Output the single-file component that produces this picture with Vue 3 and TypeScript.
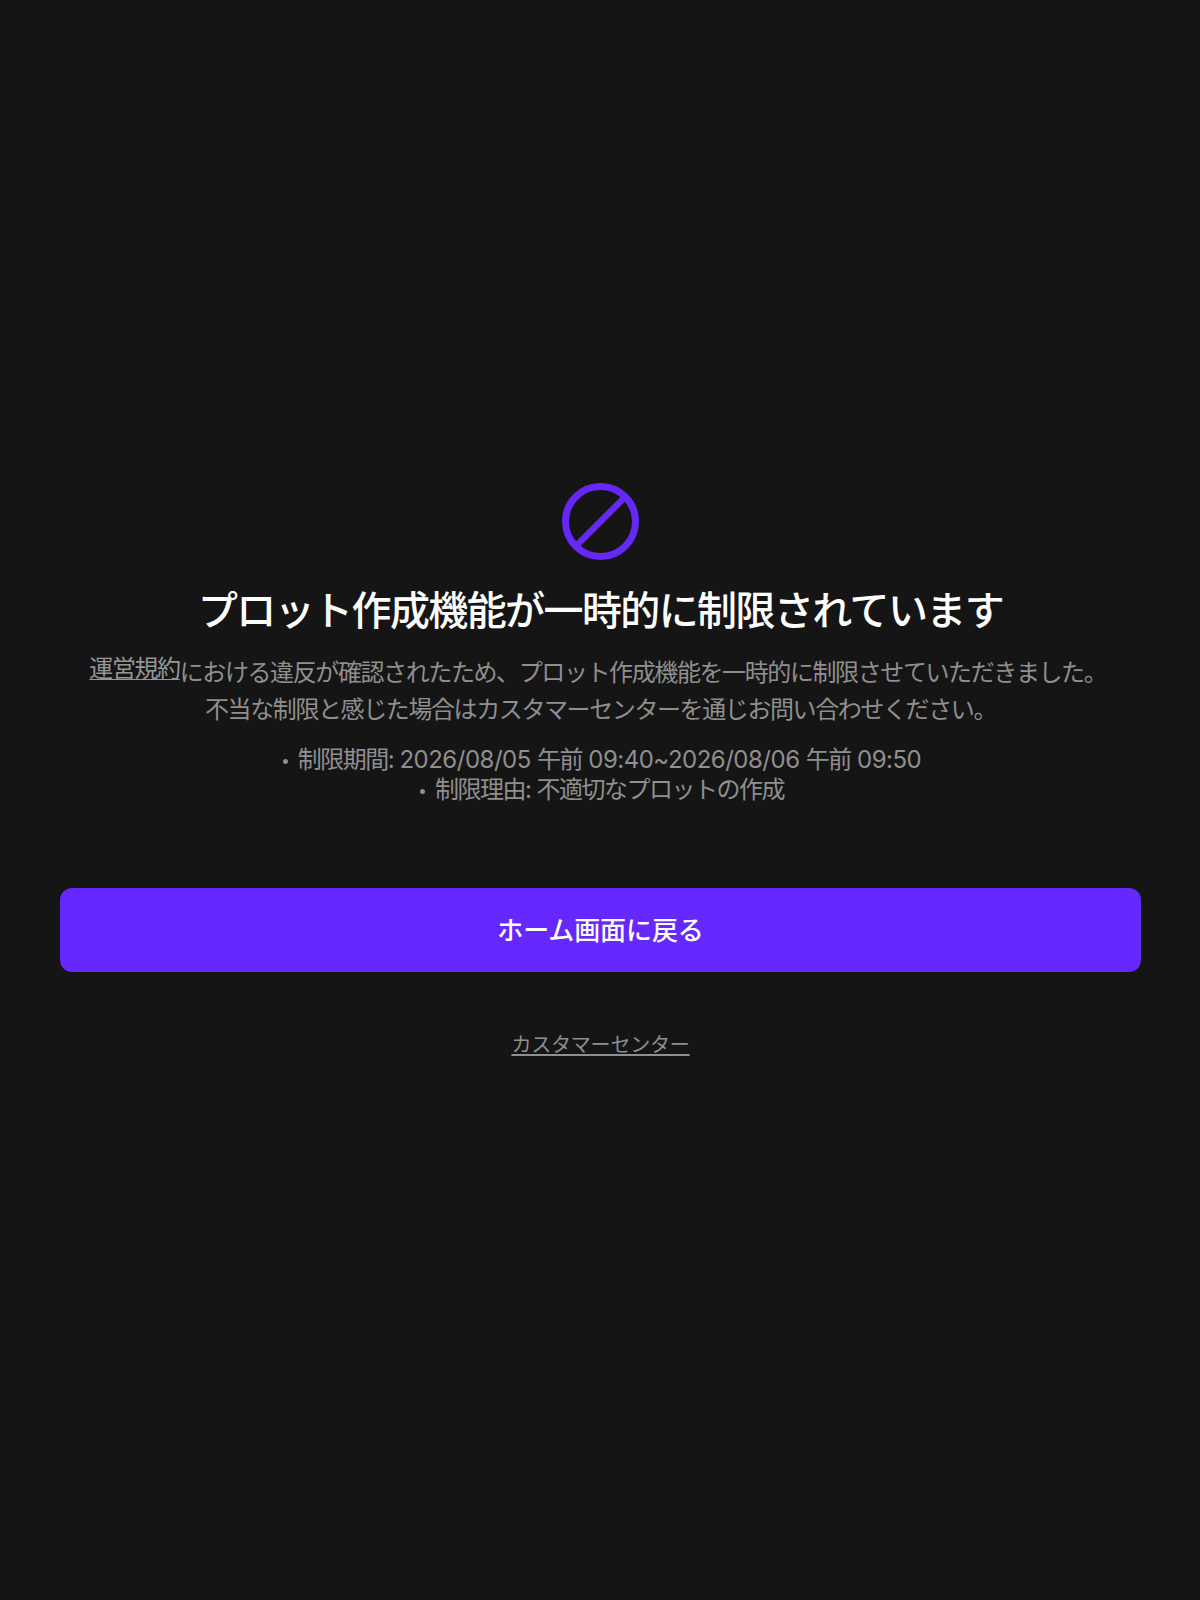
<script setup lang="ts">
type Segment = { text: string; cjk: boolean }

const details: Segment[][] = [
  [
    { text: '制限期間:', cjk: true },
    { text: ' 2026/08/05 ', cjk: false },
    { text: '午前', cjk: true },
    { text: ' 09:40~2026/08/06 ', cjk: false },
    { text: '午前', cjk: true },
    { text: ' 09:50', cjk: false },
  ],
  [
    { text: '制限理由:', cjk: true },
    { text: ' ', cjk: false },
    { text: '不適切なプロットの作成', cjk: true },
  ],
]
</script>

<template>
  <main class="page">
    <svg class="icon" viewBox="0 0 77 77" width="77" height="77" fill="none" aria-hidden="true">
      <circle cx="38.5" cy="38.5" r="35" stroke="#6528F7" stroke-width="7" />
      <path d="M14 63 L63 14" stroke="#6528F7" stroke-width="6.5" />
    </svg>
    <h1 class="title">プロット作成機能が一時的に制限されています</h1>
    <p class="body">
      <a class="link terms">運営規約</a>における違反が確認されたため、プロット作成機能を一時的に制限させていただきました。&nbsp;<br />不当な制限と感じた場合はカスタマーセンターを通じお問い合わせください。
    </p>
    <ul class="details">
      <li v-for="(row, i) in details" :key="i"><span class="dot"></span><span
          v-for="(seg, j) in row"
          :key="j"
          :class="{ tight: seg.cjk }"
        >{{ seg.text }}</span></li>
    </ul>
    <button class="btn" type="button">ホーム画面に戻る</button>
    <a class="link support">カスタマーセンター</a>
  </main>
</template>

<style>
html, body { margin: 0; background: #151515; }
</style>

<style scoped>
.page {
  box-sizing: border-box;
  height: 1600px;
  padding: 483px 59px 0 60px;
  display: flex;
  flex-direction: column;
  align-items: center;
  background: #151515;
  font-family: "Inter", "Noto Sans CJK JP", sans-serif;
  color: #8f8f8f;
}
.icon { display: block; flex: none; }
.title {
  margin: 25px 0 0;
  font-size: 40px;
  line-height: 52px;
  font-weight: 500;
  letter-spacing: -1.6px;
  color: #fff;
  white-space: nowrap;
}
.body {
  margin: 17px 0 0;
  font-size: 24px;
  line-height: 37px;
  letter-spacing: -1.4px;
  text-align: center;
  white-space: nowrap;
}
.link { color: #969696; text-decoration: underline; text-underline-offset: 2px; text-decoration-thickness: 1px; }
.terms { position: relative; top: -4px; }
.details {
  list-style: none;
  margin: 17px 0 0;
  padding: 0 0 0 3px;
  font-size: 24px;
  line-height: 30px;
  letter-spacing: -0.5px;
  text-align: center;
  white-space: pre-wrap;
}
.tight { letter-spacing: -1.5px; }
.dot {
  display: inline-block;
  width: 5px;
  height: 5px;
  margin: 0 10px 4px 0;
  border-radius: 50%;
  background: #8f8f8f;
}
.btn {
  width: 100%;
  height: 84px;
  margin-top: 83px;
  padding: 0 0 4px;
  flex: none;
  border: 0;
  border-radius: 12px;
  background: #6528ff;
  color: #fff;
  font: inherit;
  font-size: 26px;
  font-weight: 500;
  letter-spacing: -0.1px;
}
.support {
  margin-top: 59px;
  font-size: 20px;
  line-height: 28px;
  letter-spacing: -0.2px;
  color: #8f8f8f;
  text-decoration-thickness: 2px;
}
</style>
